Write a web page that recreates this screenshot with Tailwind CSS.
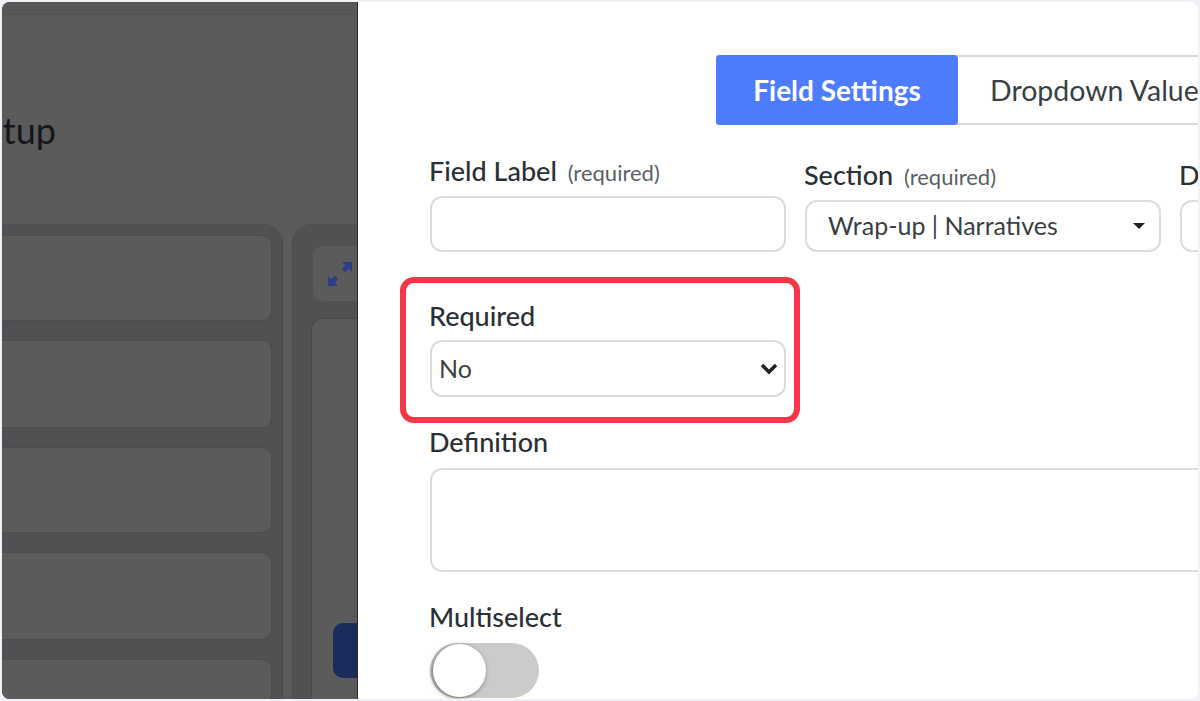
<!DOCTYPE html>
<html lang="en">
<head>
  <meta charset="UTF-8">
  <title>Field Settings</title>
  <script src="https://cdn.jsdelivr.net/npm/@tailwindcss/browser@4"></script>
</head>
<body class="bg-[#f1f1f8] h-[701px] overflow-hidden font-['Lato','Liberation_Sans',sans-serif]">
  <div class="relative m-[2px] h-[697px] w-[1196px] rounded-[8px] overflow-hidden flex">

    <!-- dimmed page behind the drawer -->
    <div class="w-[355px] shrink-0 bg-[#5b5b5b] overflow-hidden">
      <div class="h-[13px] bg-[#575757] border-b border-[#525252]"></div>
      <div class="w-[54px] h-[209px] pt-[91px] flex justify-end overflow-hidden">
        <h1 class="text-[36px] leading-[48px] text-[#14161a] whitespace-nowrap">Setup</h1>
      </div>
      <div class="flex gap-[9px] h-[475px]">
        <div class="w-[281px] shrink-0 bg-[#505152] rounded-tr-[20px] pt-[11px] pr-[10px] flex flex-col gap-[19px] border-r border-[#4a4a4a]">
          <div class="h-[86px] shrink-0 bg-[#5b5b5b] rounded-r-[10px] border border-l-0 border-[#4c4c4c]"></div>
          <div class="h-[88px] shrink-0 bg-[#5b5b5b] rounded-r-[10px] border border-l-0 border-[#4c4c4c]"></div>
          <div class="h-[86px] shrink-0 bg-[#5b5b5b] rounded-r-[10px] border border-l-0 border-[#4c4c4c]"></div>
          <div class="h-[88px] shrink-0 bg-[#5b5b5b] rounded-r-[10px] border border-l-0 border-[#4c4c4c]"></div>
          <div class="h-[60px] shrink-0 bg-[#5b5b5b] rounded-tr-[10px] border border-l-0 border-b-0 border-[#4c4c4c]"></div>
        </div>
        <div class="flex-1 bg-[#505152] rounded-tl-[20px] pt-[22px] pl-[20px] border-l border-[#4a4a4a]">
          <div class="h-[55px] bg-[#5b5b5b] rounded-l-[10px] flex items-center pl-[14px]">
            <svg class="w-[26px] h-[26px]" viewBox="0 0 26 26" fill="#2a3f85">
              <path d="M15 1h10v10l-3.4-3.4-3.6 3.6-3.2-3.2 3.6-3.6z"/>
              <path d="M11 25H1V15l3.4 3.4 3.6-3.6 3.2 3.2-3.6 3.6z"/>
            </svg>
          </div>
          <div class="mt-[17px] -ml-[2px] h-[381px] bg-[#5b5b5b] rounded-tl-[12px] border-l border-t border-[#4a4a4a] pt-[304px] pl-[21px]">
            <div class="h-[55px] bg-[#1a2b5c] rounded-l-[10px]"></div>
          </div>
        </div>
      </div>
    </div>

    <!-- drawer -->
    <div class="flex-1 bg-white border-l border-[#2b2b2b] pl-[72px] text-[#2b3036] overflow-hidden">
      <div class="h-[53px]"></div>
      <div class="flex h-[70px] ml-[286px] border-y-2 border-[#d8d8d8]">
        <div class="w-[242px] -my-[2px] shrink-0 bg-[#4d7cff] rounded-[4px] text-white text-[28px] font-bold flex items-center justify-center">Field Settings</div>
        <div class="pl-[32px] text-[28.5px] text-[#3a3f45] flex items-center whitespace-nowrap">Dropdown Values</div>
      </div>

      <div class="flex gap-[19px] mt-[29px]">
        <div class="w-[356px] shrink-0">
          <label class="block -ml-px h-[42px] text-[27px] leading-[34px] font-medium">Field Label <span class="ml-[4px] text-[22px] font-normal text-[#5a5f66]">(required)</span></label>
          <div class="h-[56px] border-2 border-[#dcdcdc] rounded-[12px]"></div>
        </div>
        <div class="w-[356px] shrink-0 pt-[4px]">
          <label class="block -ml-px h-[42px] text-[27px] leading-[34px] font-medium">Section <span class="ml-[4px] text-[22px] font-normal text-[#5a5f66]">(required)</span></label>
          <div class="h-[52px] border-2 border-[#dcdcdc] rounded-[12px] flex items-center justify-between pl-[21px] pr-[14px] text-[25px] text-[#3a3f45]">
            <span>Wrap-up | Narratives</span>
            <span class="w-0 h-0 border-x-[6px] border-x-transparent border-t-[6px] border-t-[#222]"></span>
          </div>
        </div>
        <div class="flex-1 pt-[4px]">
          <label class="block -ml-px h-[42px] text-[27px] leading-[34px] font-medium overflow-hidden">D</label>
          <div class="h-[52px] border-2 border-r-0 border-[#dcdcdc] rounded-l-[12px]"></div>
        </div>
      </div>

      <div class="w-[356px] mt-[46px]">
        <label class="block -ml-px h-[42px] text-[27px] leading-[36px] font-medium">Required</label>
        <div class="h-[57px] border-2 border-[#dcdcdc] rounded-[12px] flex items-center justify-between pl-[7px] pr-[6px] text-[25px] text-[#3a3f45]">
          <span>No</span>
          <svg class="w-[18px] h-[12px]" viewBox="0 0 18 12" fill="none" stroke="#222" stroke-width="3.5">
            <path d="M2 2l7 7 7-7"/>
          </svg>
        </div>
      </div>

      <label class="block -ml-px mt-[27px] h-[44px] text-[27px] leading-[36px] font-medium">Definition</label>
      <div class="h-[104px] border-2 border-r-0 border-[#dcdcdc] rounded-l-[12px]"></div>

      <label class="block -ml-px mt-[27px] h-[44px] text-[27px] leading-[36px] font-medium">Multiselect</label>
      <div class="relative w-[109px] h-[55px] rounded-full bg-[#cbcbcb]">
        <div class="absolute left-[3px] top-[1px] w-[53px] h-[53px] rounded-full bg-white shadow-[-1px_1px_4px_rgba(0,0,0,0.5)]"></div>
      </div>
    </div>

    <!-- annotation -->
    <div class="absolute left-[398px] top-[275px] w-[400px] h-[146px] border-[6px] border-[#f73748] rounded-[14px]"></div>
  </div>
</body>
</html>
